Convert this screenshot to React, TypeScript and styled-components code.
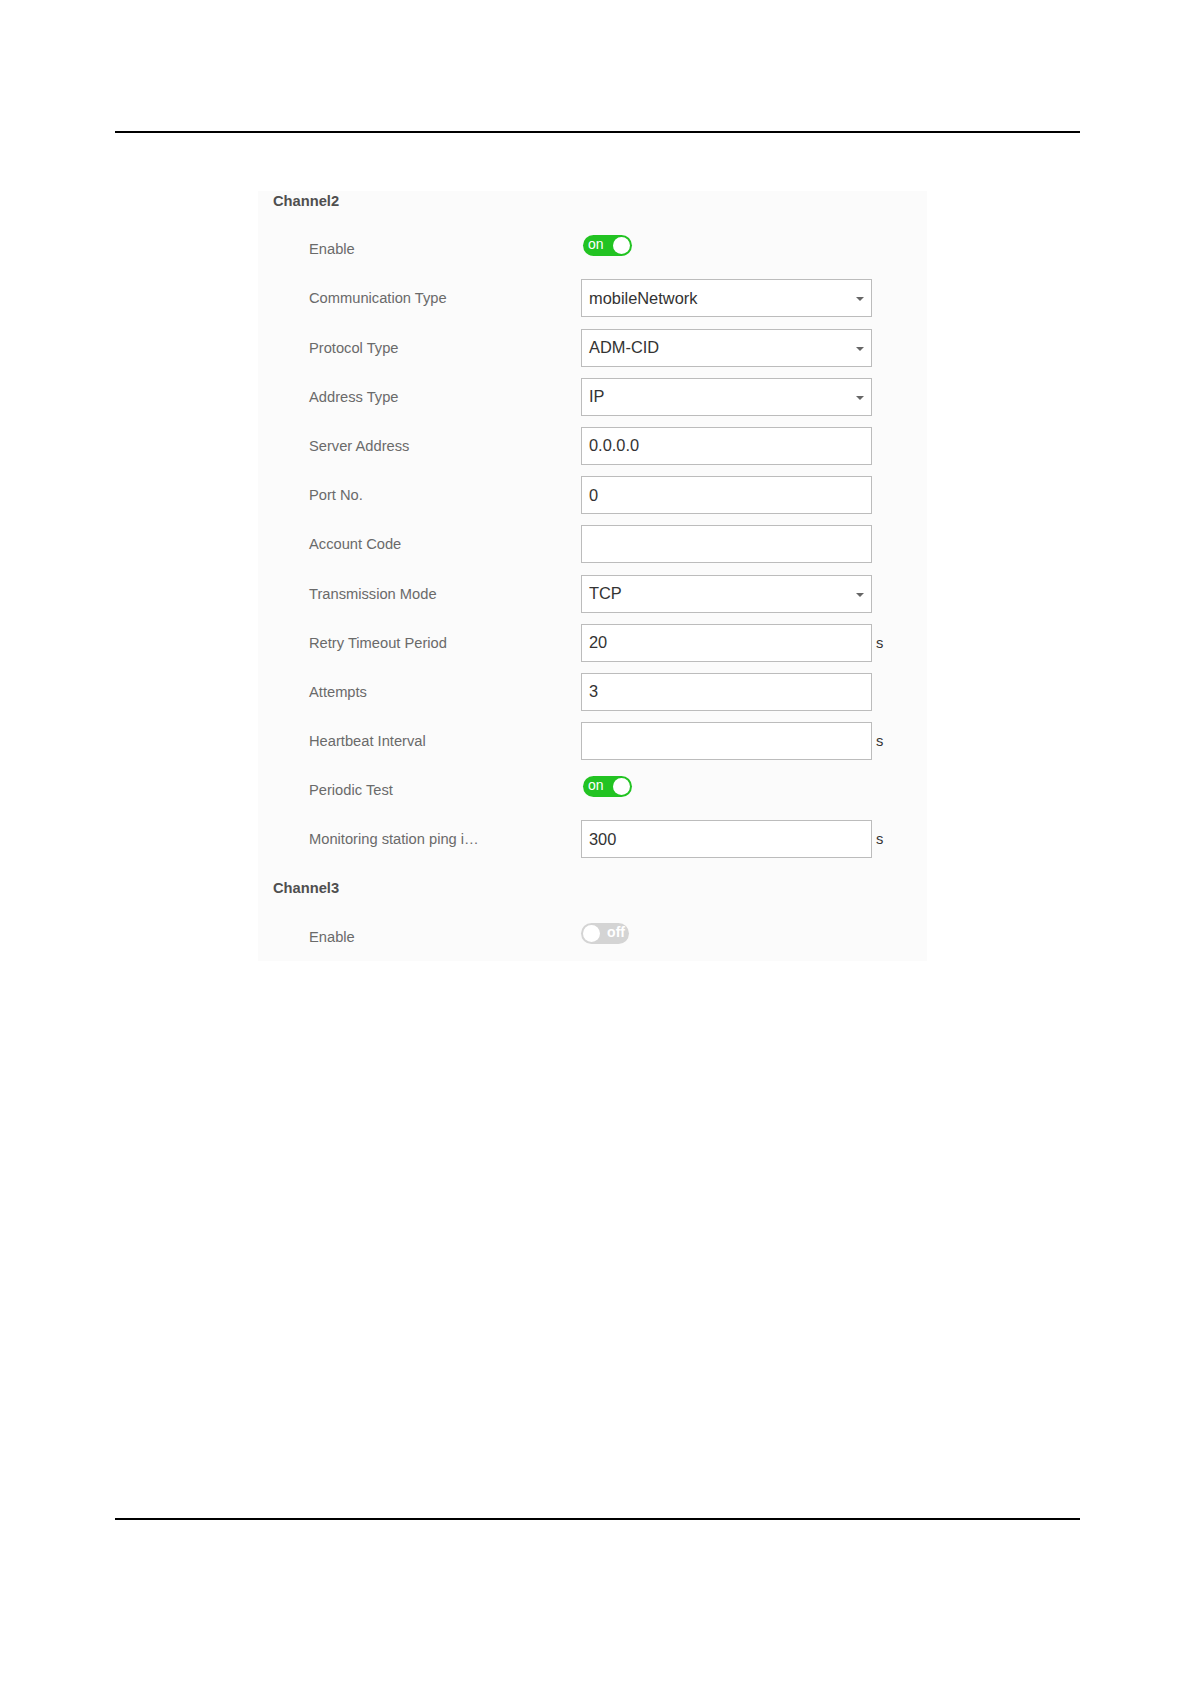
import React from 'react';
import styled, { createGlobalStyle } from 'styled-components';

const GlobalStyle = createGlobalStyle`
  html, body {
    margin: 0;
    padding: 0;
    background: #ffffff;
  }
  body {
    font-family: 'Liberation Sans', Arial, sans-serif;
  }
`;

type Field =
  | { kind: 'switch'; label: string; on: boolean }
  | { kind: 'select'; label: string; value: string }
  | { kind: 'input'; label: string; value: string; unit?: string };

const channel2: Field[] = [
  { kind: 'switch', label: 'Enable', on: true },
  { kind: 'select', label: 'Communication Type', value: 'mobileNetwork' },
  { kind: 'select', label: 'Protocol Type', value: 'ADM-CID' },
  { kind: 'select', label: 'Address Type', value: 'IP' },
  { kind: 'input', label: 'Server Address', value: '0.0.0.0' },
  { kind: 'input', label: 'Port No.', value: '0' },
  { kind: 'input', label: 'Account Code', value: '' },
  { kind: 'select', label: 'Transmission Mode', value: 'TCP' },
  { kind: 'input', label: 'Retry Timeout Period', value: '20', unit: 's' },
  { kind: 'input', label: 'Attempts', value: '3' },
  { kind: 'input', label: 'Heartbeat Interval', value: '', unit: 's' },
  { kind: 'switch', label: 'Periodic Test', on: true },
  { kind: 'input', label: 'Monitoring station ping i\u2026', value: '300', unit: 's' },
];

const channel3: Field[] = [{ kind: 'switch', label: 'Enable', on: false }];

const App = () => {
  const renderField = (field: Field, index: number) => (
    <Row key={index}>
      <Label>{field.label}</Label>
      {field.kind === 'switch' && (
        <Switch on={field.on}>
          <SwitchText on={field.on}>{field.on ? 'on' : 'off'}</SwitchText>
          <Knob />
        </Switch>
      )}
      {field.kind === 'select' && (
        <Box>
          <BoxText>{field.value}</BoxText>
          <Caret />
        </Box>
      )}
      {field.kind === 'input' && (
        <>
          <Box>
            <BoxText>{field.value}</BoxText>
          </Box>
          {field.unit && <Unit>{field.unit}</Unit>}
        </>
      )}
    </Row>
  );

  return (
    <Page>
      <GlobalStyle />
      <Rule />
      <Panel>
        <Heading>Channel2</Heading>
        {channel2.map(renderField)}
        <Heading>Channel3</Heading>
        {channel3.map(renderField)}
      </Panel>
      <BottomRule />
    </Page>
  );
};

export default App;

const Page = styled.div`
  width: 1181px;
  height: 1685px;
  padding-top: 131px;
  box-sizing: border-box;
  overflow: hidden;
`;

const Rule = styled.div`
  margin-left: 115px;
  width: 965px;
  height: 2px;
  background-color: #000;
`;

const BottomRule = styled(Rule)`
  margin-top: 557px;
`;

const Panel = styled.div`
  margin: 58px 0 0 258px;
  width: 669px;
  background-color: #fbfbfb;
`;

const Heading = styled.div`
  height: 20px;
  line-height: 20px;
  padding-left: 15px;
  margin-bottom: 13.6px;
  font-size: 14.7px;
  font-weight: 700;
  color: #4f4f4f;

  div + & {
    margin-top: 14.4px;
  }
`;

const Row = styled.div`
  display: flex;
  align-items: center;
  height: 49.2px;
  padding-left: 51px;
`;

const Label = styled.div`
  width: 272px;
  flex-shrink: 0;
  font-size: 14.7px;
  color: #6a6a6a;
  white-space: nowrap;
`;

const Box = styled.div`
  position: relative;
  display: flex;
  align-items: center;
  width: 291px;
  height: 38px;
  box-sizing: border-box;
  border: 1px solid #bcbcbc;
  background-color: #fff;
  padding-left: 7px;
`;

const BoxText = styled.span`
  font-size: 16.4px;
  color: #333;
`;

const Caret = styled.span`
  position: absolute;
  right: 7px;
  top: 50%;
  margin-top: -1px;
  width: 0;
  height: 0;
  border-left: 4px solid transparent;
  border-right: 4px solid transparent;
  border-top: 4px solid #666;
`;

const Unit = styled.span`
  margin-left: 4px;
  font-size: 14.7px;
  color: #333;
`;

const Switch = styled.div<{ on: boolean }>`
  display: flex;
  align-items: center;
  flex-direction: ${(p) => (p.on ? 'row' : 'row-reverse')};
  justify-content: space-between;
  box-sizing: border-box;
  width: ${(p) => (p.on ? '49px' : '48px')};
  height: 21px;
  margin-left: ${(p) => (p.on ? '2px' : '0')};
  margin-bottom: ${(p) => (p.on ? '7px' : '7px')};
  padding: 2px;
  border-radius: 11px;
  background-color: ${(p) => (p.on ? '#22c322' : '#d4d4d4')};
`;

const SwitchText = styled.span<{ on: boolean }>`
  font-size: 14px;
  line-height: 17px;
  color: #fff;
  padding: ${(p) => (p.on ? '0 0 2px 3px' : '0 2px 2px 0')};
  font-weight: ${(p) => (p.on ? 400 : 700)};
`;

const Knob = styled.span`
  width: 17px;
  height: 17px;
  border-radius: 50%;
  background-color: #fff;
`;
